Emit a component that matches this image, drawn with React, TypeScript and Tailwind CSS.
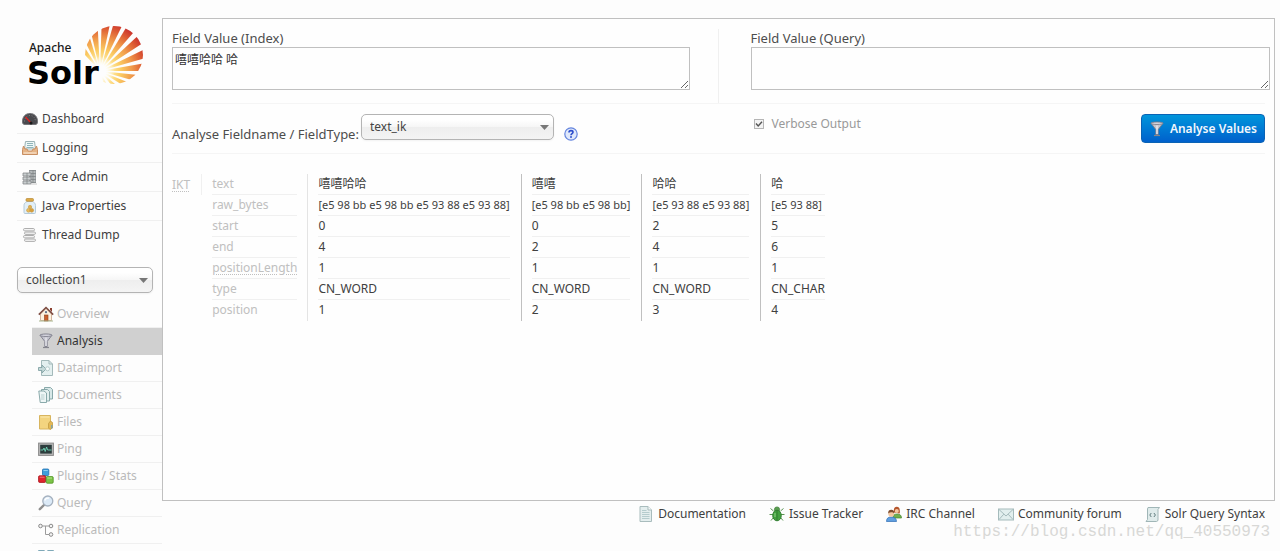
import { useState, type FC, type ReactNode } from "react";

const Svg: FC<{ children: ReactNode }> = ({ children }) => (
    <svg className="w-4 h-4 shrink-0" viewBox="0 0 16 16" fill="none" aria-hidden="true">
        {children}
    </svg>
);

const DashboardIcon = () => (
    <Svg>
        <path d="M0.5 11C0.3 5.5 3.5 2.5 8 2.5C12.5 2.5 15.7 5.5 15.5 11C15.4 13 14.5 13.5 13 13.5H3C1.5 13.5 0.6 13 0.5 11Z" fill="#4a4a4e" stroke="#77777b" />
        <path d="M2.5 10.5C2.8 6.5 5 4.5 8 4.5C11 4.5 13.2 6.5 13.5 10.5" stroke="#7d7d82" strokeDasharray="1 1.6" />
        <path d="M3.5 6L9.5 12.5" stroke="#e02020" strokeWidth="1.3" />
        <circle cx="9" cy="12" r="1.5" fill="#1b1b1b" />
    </Svg>
);

const LoggingIcon = () => (
    <Svg>
        <path d="M3.5 1.5H12.5L13.5 9H2.5Z" fill="#eef6f6" stroke="#9bb3b5" />
        <path d="M5 3.5H11M5 5.5H11M4.5 7.5H11.5" stroke="#8fb5ba" />
        <path d="M1.5 6L0.5 9.5V14.5H15.5V9.5L14.5 6L13 9H11L10 11H6L5 9H3Z" fill="#e5b487" stroke="#c98f62" />
        <path d="M1.5 13H14.5" stroke="#f5dbc0" strokeWidth="1.5" />
    </Svg>
);

const CoreIcon = () => (
    <Svg>
        <path d="M7 1H14V14H7Z" fill="#8b9092" />
        <path d="M7.5 3H13.5M7.5 6H13.5M7.5 9H13.5M7.5 12H13.5" stroke="#dfe3e4" />
        <path d="M1 4H9V7H1ZM1 8H9V11H1ZM1 12H9V15H1Z" fill="#c9cecf" stroke="#85898b" strokeWidth="0.8" />
        <path d="M5 4V15M11 1V14" stroke="#7c8183" strokeWidth="0.7" />
        <path d="M9 15H15" stroke="#c8c8c8" />
    </Svg>
);

const JarIcon = () => (
    <Svg>
        <path d="M5 3.5C3 4.5 2 5.5 2 7.5V14.5C2 15.2 2.4 15.5 3 15.5H12.5C13.2 15.5 13.5 15.2 13.5 14.5V7.5C13.5 5.5 12.5 4.5 10.5 3.5Z" fill="#e2eff7" stroke="#b4cad9" />
        <rect x="4" y="0.5" width="7.5" height="2.8" rx="1" fill="#dca947" stroke="#b98a35" strokeWidth="0.7" />
        <circle cx="8" cy="9" r="1.7" fill="#e3b04b" stroke="#c69a49" strokeWidth="0.6" />
        <circle cx="6.5" cy="12.3" r="1.9" fill="#e8bb5d" stroke="#c69a49" strokeWidth="0.6" />
        <circle cx="9.7" cy="12.3" r="1.9" fill="#d79f3b" stroke="#c69a49" strokeWidth="0.6" />
    </Svg>
);

const ThreadIcon = () => (
    <Svg>
        <rect x="1.5" y="1.5" width="11" height="2.4" rx="1.2" fill="#f4f4f4" stroke="#a5a5a5" strokeWidth="0.9" />
        <rect x="2.5" y="5" width="11" height="2.4" rx="1.2" fill="#f4f4f4" stroke="#a5a5a5" strokeWidth="0.9" />
        <rect x="1.5" y="8.5" width="11" height="2.4" rx="1.2" fill="#f4f4f4" stroke="#a5a5a5" strokeWidth="0.9" />
        <rect x="2.5" y="12" width="11" height="2.4" rx="1.2" fill="#f4f4f4" stroke="#a5a5a5" strokeWidth="0.9" />
    </Svg>
);

const HomeIcon = () => (
    <Svg>
        <path d="M12 2H14V6L12 4Z" fill="#8c4030" />
        <path d="M2.5 8V14.5H13.5V8L8 2.5Z" fill="#fdf1df" stroke="#c9a389" strokeWidth="0.8" />
        <path d="M0.8 8.6L8 1.5L15.2 8.6" stroke="#7d4c42" strokeWidth="1.6" />
        <rect x="6.5" y="9" width="3.5" height="6" fill="#c95f2d" stroke="#8d3e18" strokeWidth="0.6" />
        <circle cx="8" cy="6.2" r="1.1" fill="#5d6f86" />
        <path d="M1 15H15" stroke="#a9b68f" />
    </Svg>
);

const FunnelIcon = () => (
    <Svg>
        <path d="M2 2.2L6.8 8.5V13.5H9.2V8.5L14 2.2Z" fill="#c4c4ce" stroke="#7d7d8b" strokeWidth="0.9" />
        <ellipse cx="8" cy="2.2" rx="6" ry="1.2" fill="#dfdfe8" stroke="#777785" strokeWidth="0.9" />
        <path d="M8 4.5V13" stroke="#f6f6fa" />
        <path d="M5 14.5H11" stroke="#85858d" strokeWidth="1.2" />
    </Svg>
);

const ImportIcon = () => (
    <Svg>
        <path d="M3.5 0.5H11L14.5 4V15.5H3.5Z" fill="#e3efef" stroke="#a3b9ba" />
        <path d="M11 0.5V4H14.5" stroke="#a3b9ba" />
        <path d="M0.5 7.5H4V5L8 9L4 13V10.5H0.5Z" fill="#c4d8d8" stroke="#83a4a6" strokeWidth="0.9" />
        <circle cx="9.5" cy="8.8" r="2" fill="#f7fbfb" stroke="#a3bdbd" strokeWidth="0.7" />
    </Svg>
);

const DocumentsIcon = () => (
    <Svg>
        <path d="M6.5 0.5H12.5L14.5 2.5V12H6.5Z" fill="#d8e8e8" stroke="#7ea0a2" strokeWidth="0.9" />
        <path d="M3.5 2.5H9.5L11.5 4.5V14H3.5Z" fill="#e2eeee" stroke="#7ea0a2" strokeWidth="0.9" />
        <path d="M0.8 4H6L8.5 6V15.5H2.2Z" fill="#eef6f6" stroke="#7ea0a2" strokeWidth="0.9" />
        <path d="M3 8H6.5M3 10H6.5M3 12H6.5" stroke="#a9c6c7" strokeWidth="0.8" />
    </Svg>
);

const FolderIcon = () => (
    <Svg>
        <path d="M1.5 1.5H12.5V15H1.5Z" fill="#f3d47f" stroke="#d8b55f" />
        <path d="M12.5 7L14.5 8.5V14L12 15.5L10.5 14V9.5Z" fill="#e4b955" stroke="#c39a41" strokeWidth="0.8" />
        <path d="M13.8 11V14.5" stroke="#5ba0cf" />
        <path d="M2.5 3H11.5" stroke="#fae9b3" />
    </Svg>
);

const PingIcon = () => (
    <Svg>
        <rect x="0.6" y="2.1" width="14.8" height="12.3" fill="#b8b8b8" stroke="#8b8b8b" />
        <rect x="2.2" y="3.8" width="11.6" height="8.8" fill="#2c3d3d" />
        <path d="M2.5 9H5L6 7L7.2 10.5L8.6 6L9.6 9H13.5" stroke="#6fd6b8" strokeWidth="0.9" />
    </Svg>
);

const BlocksIcon = () => (
    <Svg>
        <rect x="4.5" y="1" width="6.3" height="6.5" rx="1" fill="#3f9fdc" stroke="#1f6fb0" strokeWidth="0.8" />
        <rect x="0.6" y="7.8" width="7" height="6.6" rx="1" fill="#e0242d" stroke="#a50e17" strokeWidth="0.8" />
        <rect x="8.2" y="8.6" width="7" height="6.6" rx="1" fill="#7cc447" stroke="#4d9220" strokeWidth="0.8" />
        <path d="M5.5 2.5H9.8" stroke="#8fd0f5" />
        <path d="M9.3 10H14" stroke="#b5e48d" />
        <path d="M1.7 9.2H6.5" stroke="#f5767b" />
    </Svg>
);

const QueryIcon = () => (
    <Svg>
        <path d="M6.5 9.5L1.8 14.2" stroke="#8f8f8f" strokeWidth="2.4" strokeLinecap="round" />
        <circle cx="9.8" cy="6" r="5" fill="#dceaf7" stroke="#a5b1bf" strokeWidth="1.3" />
        <path d="M6.8 5.5C7.3 3.6 9 2.8 11 3.2" stroke="#ffffff" strokeWidth="1.2" />
    </Svg>
);

const ReplicationIcon = () => (
    <Svg>
        <path d="M4.5 4H11M7.5 4V12.5H11" stroke="#9c9c9c" />
        <circle cx="2.5" cy="4" r="1.8" fill="#f4f4f4" stroke="#8a8a8a" />
        <circle cx="13" cy="4" r="1.8" fill="#f4f4f4" stroke="#8a8a8a" />
        <circle cx="13" cy="12.5" r="1.8" fill="#f4f4f4" stroke="#8a8a8a" />
    </Svg>
);

const BookIcon = () => (
    <Svg>
        <path d="M0.5 1.5H6L8 3L10 1.5H15.5V13H10L8 14.5L6 13H0.5Z" fill="#eef7fa" stroke="#7fa9b8" />
        <path d="M8 3V14" stroke="#7fa9b8" />
    </Svg>
);

const DocumentIcon = () => (
    <Svg>
        <path d="M2 0.5H10L13.5 4V15.5H2Z" fill="#e4eeee" stroke="#a9bcbd" />
        <path d="M10 0.5V4H13.5" fill="#f8fbfb" stroke="#a9bcbd" />
        <path d="M4 4.5H8.5M4 6.5H11.5M4 8.5H11.5M4 10.5H11.5M4 12.5H11.5" stroke="#b5cccd" />
    </Svg>
);

const BugIcon = () => (
    <Svg>
        <path d="M4.5 5L1.5 2.5M11.5 5L14.5 2.5M4 8.5H0.5M12 8.5H15.5M4.5 11.5L2 14.5M11.5 11.5L14 14.5" stroke="#5c9454" />
        <circle cx="8" cy="3.5" r="2.6" fill="#5a9e50" stroke="#3f7d3a" strokeWidth="0.7" />
        <ellipse cx="8" cy="9.5" rx="4.3" ry="5.3" fill="#43a03f" stroke="#2f7a2f" strokeWidth="0.9" />
        <path d="M8 4.5V14.5" stroke="#2f7a2f" strokeWidth="0.9" />
        <path d="M6 7V11" stroke="#8fd685" />
    </Svg>
);

const UsersIcon = () => (
    <Svg>
        <path d="M7 12C7 9 8.5 8 11 8C13.8 8 15.5 9.2 15.5 12Z" fill="#6fb04e" stroke="#46842b" strokeWidth="0.7" />
        <path d="M8 6.5C7.3 2.5 8.6 0.8 10.8 0.8C13.2 0.8 14.3 3 13.7 7.5Z" fill="#b5552b" />
        <circle cx="10.8" cy="5" r="2" fill="#f4c7a0" />
        <path d="M0.5 15.5C0.5 12.4 2 11 5.2 11C8.4 11 10.5 12.4 10.5 15.5Z" fill="#5f9fe0" stroke="#2f6db5" strokeWidth="0.7" />
        <circle cx="5.2" cy="7.8" r="2.9" fill="#f4c7a0" />
        <path d="M2.2 7.5C2 4.8 3.4 3.8 5.3 3.8C7.4 3.8 8.5 5 8.2 7.5C7 6 4 5.8 2.2 7.5Z" fill="#7c4a2c" />
    </Svg>
);

const MailIcon = () => (
    <Svg>
        <rect x="0.5" y="3" width="15" height="11" fill="#e2efee" stroke="#a5bbbc" />
        <path d="M1 3.5L8 10L15 3.5M1 13.5L5.8 8.2M15 13.5L10.2 8.2" stroke="#a5bbbc" />
    </Svg>
);

const ScriptIcon = () => (
    <Svg>
        <path d="M3 1.5H14.5L13 3.5V14.5L11.5 15.5H1L2.5 13.5V3Z" fill="#dfebeb" stroke="#a0b6b7" />
        <path d="M6.3 7L4.8 9L6.3 11M8.9 7L10.4 9L8.9 11" stroke="#5f7b7d" />
    </Svg>
);

const HelpIcon = () => (
    <svg className="w-[14px] h-[14px]" viewBox="0 0 14 14" fill="none" aria-hidden="true">
        <circle cx="7" cy="7" r="6.2" fill="#dfe8fb" stroke="#6585de" strokeWidth="1.2" />
        <path d="M5 5.6C5 4.2 5.8 3.6 7 3.6C8.2 3.6 9 4.2 9 5.2C9 6.6 7 6.6 7 8.2" stroke="#2c4dcb" strokeWidth="1.6" />
        <rect x="6.1" y="9.2" width="1.8" height="1.6" fill="#2c4dcb" />
    </svg>
);

// the rays share one origin and end on the rim of a circle
const RAYS = [-128, -112, -98, -83, -69, -54, -38, -21, -5, 11, 27, 46, 68];

const rayPoints = (angle: number) => {
    const point = (deg: number) => {
        const a = (deg * Math.PI) / 180;
        return `${100 + Math.cos(a) * 70},${71 + Math.sin(a) * 70}`;
    };
    return `100,71 ${point(angle - 5)} ${point(angle + 5)}`;
};

const Logo = () => (
    <svg className="block w-[162px] h-[105px]" viewBox="0 0 162 105" role="img" aria-label="Apache Solr">
        <defs>
            <radialGradient id="sun" gradientUnits="userSpaceOnUse" cx="100" cy="71" r="52">
                <stop offset="0.15" stopColor="#fff3b8" />
                <stop offset="0.4" stopColor="#fbcb62" />
                <stop offset="0.62" stopColor="#f0994a" />
                <stop offset="0.82" stopColor="#dd5c33" />
                <stop offset="1" stopColor="#c5282c" />
            </radialGradient>
            <radialGradient id="glow" gradientUnits="userSpaceOnUse" cx="100" cy="71" r="15">
                <stop offset="0.4" stopColor="#fdfdfd" />
                <stop offset="1" stopColor="#fdfdfd" stopOpacity="0" />
            </radialGradient>
            <clipPath id="disc">
                <circle cx="114" cy="55" r="29" />
            </clipPath>
        </defs>
        <g clipPath="url(#disc)">
            {RAYS.map((angle) => (
                <polygon key={angle} points={rayPoints(angle)} fill="url(#sun)" />
            ))}
        </g>
        <circle cx="100" cy="71" r="15" fill="url(#glow)" />
        <text x="29" y="52" fontSize="12" fontWeight="500" fill="#1a1a1a" fontFamily="Noto Sans, sans-serif">Apache</text>
        <text x="27" y="84" fontSize="32" fontWeight="700" fill="#000000" fontFamily="DejaVu Sans, sans-serif">Solr</text>
    </svg>
);

const MAIN_MENU = [
    { label: "Dashboard", icon: <DashboardIcon /> },
    { label: "Logging", icon: <LoggingIcon /> },
    { label: "Core Admin", icon: <CoreIcon /> },
    { label: "Java Properties", icon: <JarIcon /> },
    { label: "Thread Dump", icon: <ThreadIcon /> },
];

const CORE_MENU = [
    { label: "Overview", icon: <HomeIcon /> },
    { label: "Analysis", icon: <FunnelIcon /> },
    { label: "Dataimport", icon: <ImportIcon /> },
    { label: "Documents", icon: <DocumentsIcon /> },
    { label: "Files", icon: <FolderIcon /> },
    { label: "Ping", icon: <PingIcon /> },
    { label: "Plugins / Stats", icon: <BlocksIcon /> },
    { label: "Query", icon: <QueryIcon /> },
    { label: "Replication", icon: <ReplicationIcon /> },
];

const FOOTER_LINKS = [
    { label: "Documentation", icon: <DocumentIcon /> },
    { label: "Issue Tracker", icon: <BugIcon /> },
    { label: "IRC Channel", icon: <UsersIcon /> },
    { label: "Community forum", icon: <MailIcon /> },
    { label: "Solr Query Syntax", icon: <ScriptIcon /> },
];

const ROWS = [
    { name: "text", values: ["嘻嘻哈哈", "嘻嘻", "哈哈", "哈"] },
    { name: "raw_bytes", values: ["[e5 98 bb e5 98 bb e5 93 88 e5 93 88]", "[e5 98 bb e5 98 bb]", "[e5 93 88 e5 93 88]", "[e5 93 88]"] },
    { name: "start", values: ["0", "0", "2", "5"] },
    { name: "end", values: ["4", "2", "4", "6"] },
    { name: "positionLength", values: ["1", "1", "1", "1"] },
    { name: "type", values: ["CN_WORD", "CN_WORD", "CN_WORD", "CN_CHAR"] },
    { name: "position", values: ["1", "2", "3", "4"] },
];

const Dropdown: FC<{ id: string; label?: string; value: string; className: string }> = ({ id, label, value, className }) => (
    <div className={`relative ${className}`}>
        <select
            id={id}
            aria-label={label}
            className="block w-full h-[26px] appearance-none rounded-[5px] border border-[#b4b4b4] bg-[linear-gradient(#ffffff_20%,#f6f6f6_50%,#eeeeee_52%,#f4f4f4_100%)] pl-2 pr-6 text-[#444444] shadow-xs"
        >
            <option>{value}</option>
        </select>
        <svg className="absolute right-[5px] top-[11px] w-[9px] h-[5px] pointer-events-none" viewBox="0 0 9 5" aria-hidden="true">
            <path d="M0 0H9L4.5 5Z" fill="#777777" />
        </svg>
    </div>
);

const Sidebar: FC = () => {
    const [active, setActive] = useState("Analysis");

    return (
        <aside className="w-[162px] shrink-0">
            <Logo />
            <nav className="pl-[17px]">
                <ul>
                    {MAIN_MENU.map((item) => (
                        <li key={item.label} className="border-b border-[#f0f0f0] last:border-transparent">
                            <a href="#" className="flex h-7 items-center gap-1 pl-[5px] text-[#404040]">
                                {item.icon}
                                {item.label}
                            </a>
                        </li>
                    ))}
                </ul>
                <Dropdown id="core" label="Core Selector" value="collection1" className="mt-[17px] mr-[9px]" />
                <ul className="mt-2 ml-[15px]">
                    {CORE_MENU.map((item) => (
                        <li key={item.label} className={`border-b ${active === item.label ? "border-[#d0d0d0] bg-[#d0d0d0]" : "border-[#f0f0f0]"}`}>
                            <a
                                href="#"
                                onClick={() => setActive(item.label)}
                                className={`flex h-[26px] items-center gap-[3px] pl-[6px] whitespace-nowrap ${active === item.label ? "text-[#333333]" : "text-[#bababa]"}`}
                            >
                                {item.icon}
                                {item.label}
                            </a>
                        </li>
                    ))}
                    <li>
                        <a href="#" aria-label="Schema Browser" className="flex h-[26px] items-center pl-[6px]">
                            <BookIcon />
                        </a>
                    </li>
                </ul>
            </nav>
        </aside>
    );
};

const AnalysisForm: FC = () => {
    const [verbose, setVerbose] = useState(true);

    return (
        <form className="mr-[9px]" onSubmit={(e) => e.preventDefault()}>
            <div className="flex border-b border-[#f5f5f5]">
                <div className="w-1/2 border-r border-[#f0f0f0] pb-[13px]">
                    <label htmlFor="index" className="block text-[13px] leading-[18px]">Field Value (Index)</label>
                    <textarea id="index" className="block w-[95%] h-[43px] resize border border-[#c0c0c0] px-[2px] py-[3px] text-[#333333]" defaultValue="嘻嘻哈哈 哈" />
                </div>
                <div className="flex-1 pl-8 -mr-[5px] pb-[13px]">
                    <label htmlFor="query" className="block text-[13px] leading-[18px]">Field Value (Query)</label>
                    <textarea id="query" className="block w-full h-[43px] resize border border-[#c0c0c0] px-[2px] py-[3px] text-[#333333]" />
                </div>
            </div>
            <div className="flex border-b border-[#f5f5f5] pt-[10px] pb-[10px]">
                <div className="flex w-1/2 items-start">
                    <label htmlFor="type" className="pt-[11px] pr-[2px] text-[13px] leading-[18px]">Analyse Fieldname / FieldType:</label>
                    <Dropdown id="type" value="text_ik" className="w-[193px]" />
                    <a href="#" aria-label="Help" className="ml-[10px] mt-[13px]">
                        <HelpIcon />
                    </a>
                </div>
                <div className="flex w-1/2 items-start justify-between pl-[35px]">
                    <label className="flex items-center gap-2 pt-[1px] text-[#999999]">
                        <input
                            type="checkbox"
                            checked={verbose}
                            onChange={() => setVerbose(!verbose)}
                            className="peer sr-only"
                        />
                        <span className="flex w-[10px] h-[10px] items-center justify-center border border-[#b5b5b5] bg-[#f3f3f3] text-transparent peer-checked:text-[#555555]">
                            <svg className="w-2 h-2" viewBox="0 0 8 8" fill="none" aria-hidden="true">
                                <path d="M1 3.5L3.2 6L7 1.8" stroke="currentColor" strokeWidth="1.4" />
                            </svg>
                        </span>
                        Verbose Output
                    </label>
                    <button type="submit" className="flex h-[29px] items-center gap-[5px] rounded-[4px] border border-[#0a63b5] bg-linear-to-b from-[#0095db] to-[#0060cc] px-[7px] font-semibold text-[#f2f7fc]">
                        <FunnelIcon />
                        Analyse Values
                    </button>
                </div>
            </div>
        </form>
    );
};

const AnalysisResult: FC = () => (
    <table className="mt-5 border-separate border-spacing-0 text-left leading-5">
        <tbody>
            {ROWS.map((row, i) => (
                <tr key={row.name}>
                    <td className={`p-0 pr-[11px] text-[#c0c0c0] ${i === 0 ? "border-r border-[#f0f0f0]" : ""}`}>
                        {i === 0 && <abbr title="IKTokenizer" className="underline decoration-dotted underline-offset-2">IKT</abbr>}
                    </td>
                    <th scope="row" className="px-[10px] py-0 font-normal text-[#c0c0c0]">
                        <div className={`h-[21px] border-b ${i === ROWS.length - 1 ? "border-transparent" : "border-[#f0f0f0]"}`}>
                            {row.name === "positionLength" ? (
                                <abbr title={row.name} className="underline decoration-dotted underline-offset-2">{row.name}</abbr>
                            ) : (
                                row.name
                            )}
                        </div>
                    </th>
                    {row.values.map((value, j) => (
                        <td key={j} className={`border-l py-0 pl-[10px] pr-[11px] text-[#404040] ${j === 0 ? "border-[#e4e4e4]" : "border-[#c0c0c0]"}`}>
                            <div className={`h-[21px] border-b whitespace-nowrap ${i === ROWS.length - 1 ? "border-transparent" : "border-[#f0f0f0]"} ${row.name === "raw_bytes" ? "text-[11px]" : ""}`}>
                                {value}
                            </div>
                        </td>
                    ))}
                </tr>
            ))}
        </tbody>
    </table>
);

export default function App() {
    return (
        <div className="relative flex h-screen overflow-hidden bg-[#fdfdfd] font-['Noto_Sans','Noto_Sans_CJK_SC',sans-serif] text-[12px] leading-[18px] text-[#4d4d4d]">
            <Sidebar />
            <div className="flex-1 min-w-0 pt-[18px] pr-[5px]">
                <main className="min-h-[483px] border border-[#c0c0c0] pt-[10px] pl-[9px] bg-[#fefefe]">
                    <AnalysisForm />
                    <AnalysisResult />
                </main>
                <footer className="flex justify-end gap-[23px] pt-1 pr-[10px]">
                    {FOOTER_LINKS.map((link) => (
                        <a key={link.label} href="#" className="flex items-center gap-1 whitespace-nowrap text-[#404040]">
                            {link.icon}
                            {link.label}
                        </a>
                    ))}
                </footer>
            </div>
            <p className="absolute right-[10px] bottom-[9px] font-['Liberation_Mono',monospace] text-[16px] leading-5 text-[#d8d8d6] pointer-events-none">
                https://blog.csdn.net/qq_40550973
            </p>
        </div>
    );
}
